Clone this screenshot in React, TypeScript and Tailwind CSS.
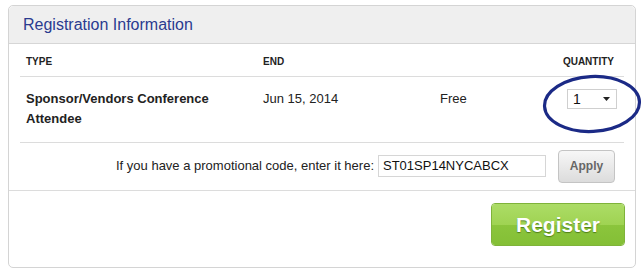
import React from "react";

const font = { fontFamily: '"Liberation Sans", Arial, sans-serif' };

export default function App() {
  return (
    <div className="w-[644px] h-[278px] bg-white pt-[5px] pl-2" style={font}>
      <div className="relative w-[628px] h-[263px] border border-[#d4d4d4] rounded-[5px] overflow-visible">
        {/* Header */}
        <div className="h-[38px] bg-[#efefef] border-b border-[#d6d6d6] rounded-t-[5px] flex items-center pl-[14px]">
          <span className="text-[16px] text-[#2a3b8f]">Registration Information</span>
        </div>

        {/* Table */}
        <div className="px-[11px]">
          <div className="h-[33px] flex items-end pb-[7px] border-b border-[#dcdcdc] text-[10px] font-bold text-[#222] pl-[6px] pr-[10px]">
            <span className="w-[237px]">TYPE</span>
            <span className="flex-1">END</span>
            <span>QUANTITY</span>
          </div>
          <div className="h-[66px] flex items-start pt-[12px] border-b border-[#dcdcdc] pl-[6px] pr-[7px]">
            <div className="w-[237px] text-[13px] font-bold leading-[20px] text-[#222]">
              Sponsor/Vendors Conference
              <br />
              Attendee
            </div>
            <div className="w-[177px] text-[13px] leading-[20px] text-[#222]">Jun 15, 2014</div>
            <div className="flex-1 text-[13px] leading-[20px] text-[#222]">Free</div>
            <div className="w-[50px] h-[20px] border border-[#cfcfcf] bg-white flex items-center justify-between pl-[5px] pr-[6px] text-[14px] text-[#111]">
              <span>1</span>
              <svg width="7" height="4" viewBox="0 0 7 4">
                <path d="M0 0h7L3.5 4z" fill="#222" />
              </svg>
            </div>
          </div>
          <div className="h-[47px] flex items-center justify-end gap-[4px] pr-[9px] pb-[1px]">
            <span className="text-[13px] text-[#222]">If you have a promotional code, enter it here:</span>
            <div className="w-[168px] h-[22px] border border-[#d6d6d6] bg-white flex items-center pl-[4px] text-[13px] text-[#111]">
              ST01SP14NYCABCX
            </div>
            <button className="ml-[8px] w-[57px] h-[33px] rounded-[4px] border border-[#c4c4c4] bg-gradient-to-b from-[#f7f7f7] to-[#dcdcdc] text-[12px] font-bold text-[#666]">
              Apply
            </button>
          </div>
        </div>

        {/* Footer */}
        <div className="border-t border-[#dcdcdc] flex justify-end pt-[12px] pr-[10px]">
          <button className="relative w-[134px] h-[43px] rounded-[4px] border border-[#7fb33a] overflow-hidden text-[21px] font-bold text-white [text-shadow:0_1px_1px_rgba(40,80,0,0.6)]">
            <span className="absolute inset-0 flex flex-col">
              <span className="h-1/2 bg-gradient-to-b from-[#acdc66] to-[#9fd352]" />
              <span className="h-1/2 bg-gradient-to-b from-[#8bc53c] to-[#84bf36]" />
            </span>
            <span className="relative">Register</span>
          </button>
        </div>

        {/* Hand-drawn highlight round the quantity */}
        <svg className="absolute left-[533px] top-[68px] pointer-events-none" width="100" height="60" viewBox="0 0 100 60">
          <ellipse cx="50" cy="30" rx="47.5" ry="27.5" fill="none" stroke="#1b2a86" strokeWidth="3.2" transform="rotate(-3 50 30)" />
        </svg>
      </div>
    </div>
  );
}
